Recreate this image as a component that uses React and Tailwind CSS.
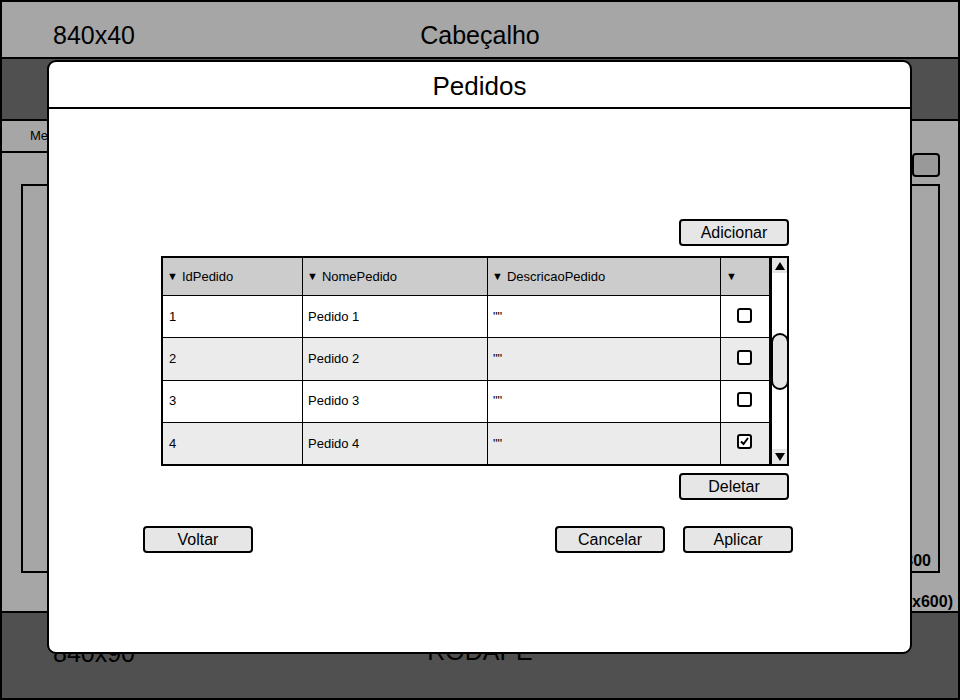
import React from "react";

const font = { fontFamily: '"Liberation Sans", Arial, sans-serif' };

function Btn({ children, className = "" }) {
  return (
    <div
      className={
        "flex items-center justify-center h-[27px] w-[110px] rounded-[4px] border-2 border-black bg-[#e6e6e6] text-[16px] text-black " +
        className
      }
    >
      {children}
    </div>
  );
}

function Check({ checked }) {
  return (
    <div className="w-[15px] h-[15px] rounded-[3px] border-2 border-black bg-white flex items-center justify-center">
      {checked && (
        <svg width="11" height="11" viewBox="0 0 11 11">
          <path d="M2 5.5 L4.5 8 L9 2" fill="none" stroke="black" strokeWidth="2" />
        </svg>
      )}
    </div>
  );
}

const rows = [
  { id: "1", nome: "Pedido 1", checked: false, bg: "bg-white" },
  { id: "2", nome: "Pedido 2", checked: false, bg: "bg-[#ebebeb]" },
  { id: "3", nome: "Pedido 3", checked: false, bg: "bg-white" },
  { id: "4", nome: "Pedido 4", checked: true, bg: "bg-[#ebebeb]" },
];

export default function App() {
  return (
    <div className="relative w-[960px] h-[700px] overflow-hidden" style={font}>
      {/* Background wireframe page */}
      <div className="flex flex-col w-[960px] h-[700px] border-2 border-black bg-[#a6a6a6]">
        <div className="relative h-[57px] shrink-0 border-b-2 border-black bg-[#a6a6a6] text-[25px] text-black">
          <div className="absolute left-[51px] top-[19px] leading-[28px]">840x40</div>
          <div className="flex justify-center pt-[19px] leading-[28px]">Cabeçalho</div>
        </div>
        <div className="h-[62px] shrink-0 border-b-2 border-black bg-[#505050]" />
        <div className="flex h-[32px] shrink-0">
          <div className="w-[420px] h-[32px] border-b-2 border-r-2 border-black bg-[#a6a6a6] pl-[28px] flex items-center text-[13px]">
            Menu
          </div>
          <div className="flex-1" />
        </div>
        <div className="relative flex-1 border-b-2 border-black bg-[#a6a6a6]">
          <div className="absolute right-[18px] top-[0px] w-[28px] h-[24px] rounded-[4px] border-2 border-black bg-[#999999]" />
          <div className="absolute left-[19px] right-[18px] top-[31px] h-[389px] border-2 border-black flex items-end justify-end pr-[7px] pb-[0px] text-[16px] font-bold">
            <span className="relative top-[2px]">400x300</span>
          </div>
          <div className="absolute right-[5px] top-[437px] text-[16px] font-bold">(840x600)</div>
        </div>
        <div className="flex-1 max-h-[85px] h-[85px] bg-[#505050] relative text-[25px] text-black">
          <div className="absolute left-[51px] top-[26px] leading-[28px]">840x90</div>
          <div className="flex justify-center pt-[24px] leading-[28px]">RODAPE</div>
        </div>
      </div>

      {/* Modal */}
      <div className="absolute left-[47px] top-[60px] w-[865px] h-[594px] rounded-[9px] border-2 border-black bg-white flex flex-col">
        <div className="h-[47px] shrink-0 border-b-2 border-black flex items-center justify-center text-[26px] text-black pt-[4px]">
          Pedidos
        </div>
        <div className="pl-[112px] pt-[110px] w-[740px]">
          <div className="flex justify-end">
            <Btn>Adicionar</Btn>
          </div>
          <div className="mt-[10px] flex h-[210px] border-2 border-black">
            <div className="flex-1 flex flex-col text-[13px] text-black">
              <div className="flex h-[38px] bg-[#cccccc] border-b border-black">
                <div className="w-[140px] border-r border-black flex items-center pl-[4px]">
                  <span className="text-[11px] mr-[4px]">▼</span>IdPedido
                </div>
                <div className="w-[185px] border-r border-black flex items-center pl-[4px]">
                  <span className="text-[11px] mr-[4px]">▼</span>NomePedido
                </div>
                <div className="w-[233px] border-r border-black flex items-center pl-[4px]">
                  <span className="text-[11px] mr-[4px]">▼</span>DescricaoPedido
                </div>
                <div className="flex-1 flex items-center pl-[5px]">
                  <span className="text-[11px]">▼</span>
                </div>
              </div>
              {rows.map((r, i) => (
                <div
                  key={r.id}
                  className={
                    "flex flex-1 " + r.bg + (i < rows.length - 1 ? " border-b border-black" : "")
                  }
                >
                  <div className="w-[140px] border-r border-black flex items-center pl-[6px]">{r.id}</div>
                  <div className="w-[185px] border-r border-black flex items-center pl-[5px]">{r.nome}</div>
                  <div className="w-[233px] border-r border-black flex items-center pl-[5px]">""</div>
                  <div className="flex-1 flex items-center justify-center pr-[2px] pb-[3px]">
                    <Check checked={r.checked} />
                  </div>
                </div>
              ))}
            </div>
            <div className="w-[18px] border-l-[3px] border-black bg-white flex flex-col">
              <div className="h-[15px] bg-[#e6e6e6] flex items-center justify-center">
                <svg width="10" height="8" viewBox="0 0 10 8">
                  <path d="M5 0 L10 8 L0 8 Z" fill="black" />
                </svg>
              </div>
              <div className="relative flex-1">
                <div className="absolute left-[-1px] right-[-2px] top-[60px] h-[57px] rounded-[9px] border-2 border-black bg-[#e6e6e6]" />
              </div>
              <div className="h-[15px] bg-[#e6e6e6] flex items-center justify-center">
                <svg width="10" height="8" viewBox="0 0 10 8">
                  <path d="M0 0 L10 0 L5 8 Z" fill="black" />
                </svg>
              </div>
            </div>
          </div>
          <div className="flex justify-end mt-[7px]">
            <Btn>Deletar</Btn>
          </div>
        </div>
        <div className="flex mt-[26px] pl-[94px] pr-[117px] w-full">
          <Btn className="h-[26px]">Voltar</Btn>
          <div className="flex-1" />
          <Btn className="h-[26px]">Cancelar</Btn>
          <Btn className="h-[26px] ml-[18px]">Aplicar</Btn>
        </div>
      </div>
    </div>
  );
}
